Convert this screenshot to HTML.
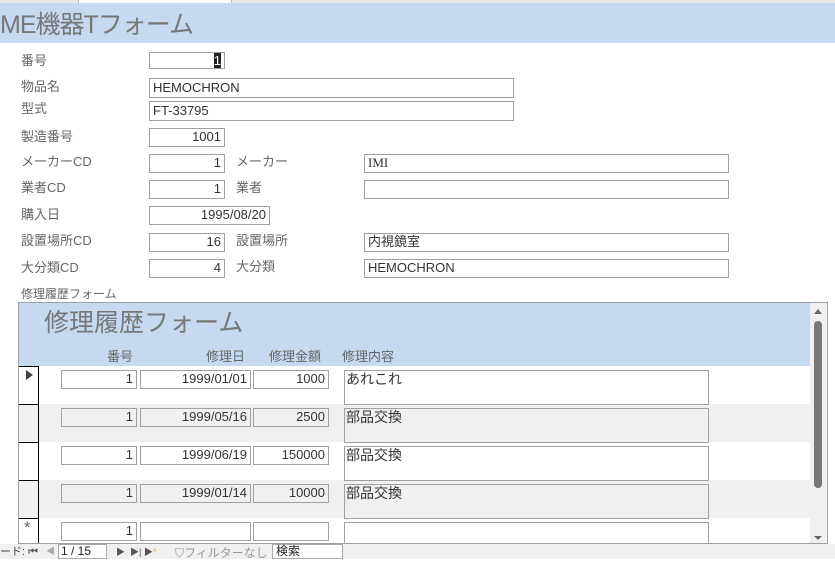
<!DOCTYPE html>
<html><head><meta charset="utf-8"><style>
body{margin:0;width:835px;height:559px;background:#fff;position:relative;overflow:hidden;font-family:"Liberation Sans","Noto Sans CJK JP",sans-serif;font-size:13px;color:#555}
.a{position:absolute}
.lbl{position:absolute;font-size:13px;color:#666;white-space:nowrap}
.tb{position:absolute;border:1px solid #a0a0a0;background:#fff;height:17px;box-sizing:border-box;font-size:13px;color:#333;line-height:15px;padding:0 3px;white-space:nowrap;overflow:hidden}
.r{text-align:right}
.g{background:#f0f0f0}
</style></head><body>
<div class="a" style="left:0;top:0;width:835px;height:3px;background:#e8e8e8"></div>
<div class="a" style="left:78px;top:0;width:152px;height:3px;background:#fff;border-left:1px solid #bbb;border-right:1px solid #bbb"></div>
<div class="a" style="left:0;top:3px;width:835px;height:40px;background:#c6d9f0"></div>
<div class="lbl" style="left:0;top:5px;font-size:25px;color:#777;letter-spacing:-1px">ME機器Tフォーム</div>

<div class="lbl" style="left:21px;top:50px">番号</div>
<div class="tb r" style="left:149px;top:52px;width:76px"><span style="background:#222;color:#fff">1</span></div>
<div class="lbl" style="left:21px;top:76px">物品名</div>
<div class="tb" style="left:149px;top:78px;width:365px;height:20px;line-height:18px">HEMOCHRON</div>
<div class="lbl" style="left:21px;top:98px">型式</div>
<div class="tb" style="left:149px;top:101px;width:365px;height:20px;line-height:18px">FT-33795</div>
<div class="lbl" style="left:21px;top:126px">製造番号</div>
<div class="tb r" style="left:149px;top:128px;width:76px;height:19px">1001</div>

<div class="lbl" style="left:21px;top:151px">メーカーCD</div>
<div class="tb r" style="left:149px;top:154px;width:76px;height:19px">1</div>
<div class="lbl" style="left:236px;top:151px">メーカー</div>
<div class="tb" style="left:364px;top:154px;width:365px;height:19px;font-family:'Liberation Serif',serif">IMI</div>

<div class="lbl" style="left:21px;top:177px">業者CD</div>
<div class="tb r" style="left:149px;top:180px;width:76px;height:19px">1</div>
<div class="lbl" style="left:236px;top:177px">業者</div>
<div class="tb" style="left:364px;top:180px;width:365px;height:19px"></div>

<div class="lbl" style="left:21px;top:204px">購入日</div>
<div class="tb r" style="left:149px;top:206px;width:121px;height:19px">1995/08/20</div>

<div class="lbl" style="left:21px;top:230px">設置場所CD</div>
<div class="tb r" style="left:149px;top:233px;width:76px;height:19px">16</div>
<div class="lbl" style="left:236px;top:230px">設置場所</div>
<div class="tb" style="left:364px;top:233px;width:365px;height:19px">内視鏡室</div>

<div class="lbl" style="left:21px;top:257px">大分類CD</div>
<div class="tb r" style="left:149px;top:259px;width:76px;height:19px">4</div>
<div class="lbl" style="left:236px;top:256px">大分類</div>
<div class="tb" style="left:364px;top:259px;width:365px;height:19px">HEMOCHRON</div>

<div class="lbl" style="left:21px;top:285px;font-size:12px">修理履歴フォーム</div>

<div class="a" style="left:18px;top:302px;width:810px;height:242px;border:1px solid #a0a0a0;box-sizing:border-box;overflow:hidden">
 <div class="a" style="left:0;top:0;width:791px;height:63px;background:#c6d9f0"></div>
 <div class="lbl" style="left:25px;top:0px;font-size:25px;color:#777">修理履歴フォーム</div>
 <div class="lbl" style="left:88px;top:43px">番号</div>
 <div class="lbl" style="left:187px;top:43px">修理日</div>
 <div class="lbl" style="left:250px;top:43px">修理金額</div>
 <div class="lbl" style="left:323px;top:43px">修理内容</div>
 <div class="a" style="left:0;top:101px;width:791px;height:38px;background:#f0f0f0"></div>
 <div class="a" style="left:0;top:177px;width:791px;height:38px;background:#f0f0f0"></div>
 <div class="a" style="left:19px;top:63px;width:1px;height:180px;background:#000"></div>
 <div class="a" style="left:0;top:63px;width:20px;height:1px;background:#000"></div>
 <div class="a" style="left:0;top:101px;width:20px;height:1px;background:#000"></div>
 <div class="a" style="left:0;top:139px;width:20px;height:1px;background:#000"></div>
 <div class="a" style="left:0;top:177px;width:20px;height:1px;background:#000"></div>
 <div class="a" style="left:0;top:215px;width:20px;height:1px;background:#000"></div>
 <div class="a" style="left:7px;top:67px;width:0;height:0;border-top:5px solid transparent;border-bottom:5px solid transparent;border-left:7px solid #444"></div>
 <div class="lbl" style="left:5px;top:215px;color:#666;font-size:17px">*</div>
 <div class="a" style="left:791px;top:0;width:17px;height:240px;background:#f0f0f0"></div>
 <div class="a" style="left:795px;top:18px;width:8px;height:167px;background:#777;border-radius:4px"></div>
 <div class="a" style="left:795px;top:6px;width:0;height:0;border-left:4px solid transparent;border-right:4px solid transparent;border-bottom:5px solid #666"></div>
 <div class="a" style="left:795px;top:233px;width:0;height:0;border-left:4px solid transparent;border-right:4px solid transparent;border-top:4px solid #666"></div>

 <div class="tb r" style="left:42px;top:67px;width:76px;height:19px">1</div>
 <div class="tb r" style="left:121px;top:67px;width:111px;height:19px">1999/01/01</div>
 <div class="tb r" style="left:234px;top:67px;width:76px;height:19px">1000</div>
 <div class="tb" style="left:325px;top:67px;width:365px;height:35px;line-height:17px;font-size:14px;padding-left:1px">あれこれ</div>

 <div class="tb r g" style="left:42px;top:105px;width:76px;height:19px">1</div>
 <div class="tb r g" style="left:121px;top:105px;width:111px;height:19px">1999/05/16</div>
 <div class="tb r g" style="left:234px;top:105px;width:76px;height:19px">2500</div>
 <div class="tb g" style="left:325px;top:105px;width:365px;height:35px;line-height:17px;font-size:14px;padding-left:1px">部品交換</div>

 <div class="tb r" style="left:42px;top:143px;width:76px;height:19px">1</div>
 <div class="tb r" style="left:121px;top:143px;width:111px;height:19px">1999/06/19</div>
 <div class="tb r" style="left:234px;top:143px;width:76px;height:19px">150000</div>
 <div class="tb" style="left:325px;top:143px;width:365px;height:35px;line-height:17px;font-size:14px;padding-left:1px">部品交換</div>

 <div class="tb r g" style="left:42px;top:181px;width:76px;height:19px">1</div>
 <div class="tb r g" style="left:121px;top:181px;width:111px;height:19px">1999/01/14</div>
 <div class="tb r g" style="left:234px;top:181px;width:76px;height:19px">10000</div>
 <div class="tb g" style="left:325px;top:181px;width:365px;height:35px;line-height:17px;font-size:14px;padding-left:1px">部品交換</div>

 <div class="tb r" style="left:42px;top:219px;width:76px;height:19px">1</div>
 <div class="tb r" style="left:121px;top:219px;width:111px;height:19px"></div>
 <div class="tb r" style="left:234px;top:219px;width:76px;height:19px"></div>
 <div class="tb" style="left:325px;top:219px;width:365px;height:25px"></div>
</div>

<div class="a" style="left:0;top:544px;width:835px;height:15px;background:#f0f0f0"></div>
<div class="lbl" style="left:0;top:543px;font-size:11px;color:#444">ード: <span style="color:#555">⏮</span></div>
<div class="lbl" style="left:46px;top:544px;font-size:9px;color:#aaa">◀</div>
<div class="a" style="left:58px;top:544px;width:49px;height:15px;background:#fff;border:1px solid #aaa;box-sizing:border-box;font-size:12px;color:#222;line-height:13px;padding-left:2px">1 / 15</div>
<div class="lbl" style="left:116px;top:545px;font-size:9px;color:#555">▶ &nbsp;▶| ▶<span style="color:#e8b040">*</span></div>
<div class="lbl" style="left:175px;top:544px;font-size:12px;color:#999">⛉フィルターなし</div>
<div class="a" style="left:272px;top:544px;width:71px;height:15px;background:#fff;border:1px solid #aaa;box-sizing:border-box;font-size:12px;color:#222;line-height:13px;padding-left:3px">検索</div>
</body></html>
